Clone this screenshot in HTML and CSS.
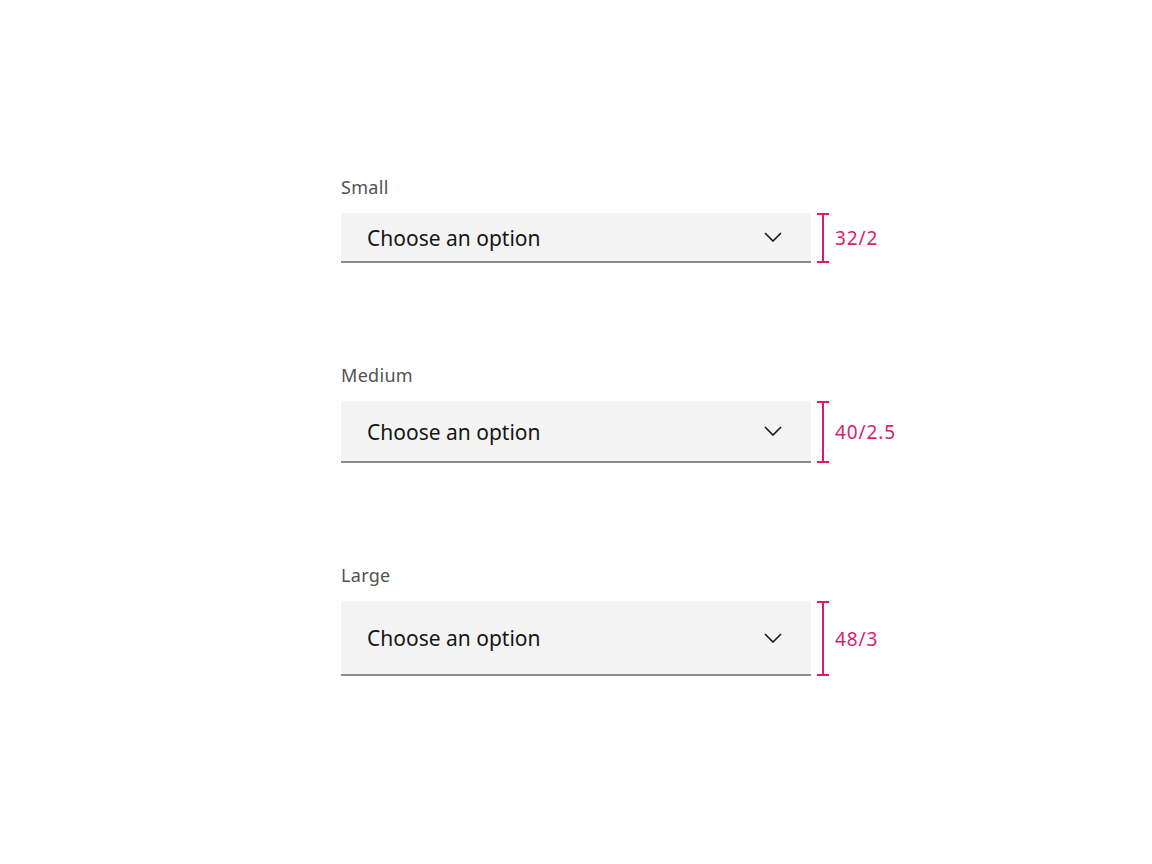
FILE: index.html
```html
<!DOCTYPE html>
<html lang="en">
<head>
<meta charset="utf-8">
<title>Dropdown sizes</title>
<link rel="stylesheet" href="styles.css">
</head>
<body>
<main class="page">
  <section class="group">
    <div class="label">Small</div>
    <div class="row">
      <div class="field field-sm">
        <span class="value">Choose an option</span>
        <svg class="chevron" width="18" height="10" viewBox="0 0 18 10"><path d="M1 1 L9 9 L17 1" fill="none" stroke="#161616" stroke-width="1.6"/></svg>
      </div>
      <div class="measure"><span class="bracket"></span><span class="spec">32/2</span></div>
    </div>
  </section>
  <section class="group">
    <div class="label">Medium</div>
    <div class="row">
      <div class="field field-md">
        <span class="value">Choose an option</span>
        <svg class="chevron" width="18" height="10" viewBox="0 0 18 10"><path d="M1 1 L9 9 L17 1" fill="none" stroke="#161616" stroke-width="1.6"/></svg>
      </div>
      <div class="measure"><span class="bracket"></span><span class="spec">40/2.5</span></div>
    </div>
  </section>
  <section class="group">
    <div class="label">Large</div>
    <div class="row">
      <div class="field field-lg">
        <span class="value">Choose an option</span>
        <svg class="chevron" width="18" height="10" viewBox="0 0 18 10"><path d="M1 1 L9 9 L17 1" fill="none" stroke="#161616" stroke-width="1.6"/></svg>
      </div>
      <div class="measure"><span class="bracket"></span><span class="spec">48/3</span></div>
    </div>
  </section>
</main>
</body>
</html>
```
FILE: styles.css
```css
html, body {
  margin: 0;
  padding: 0;
  background: #ffffff;
}
body {
  font-family: "Noto Sans", "Open Sans", sans-serif;
  color: #161616;
}
.page {
  display: flex;
  flex-direction: column;
  gap: 100px;
  padding: 175px 0 0 341px;
}
.group {
  display: flex;
  flex-direction: column;
}
.label {
  font-size: 18px;
  line-height: 24px;
  color: #525252;
  letter-spacing: 0.3px;
  margin-bottom: 14px;
}
.row {
  display: flex;
  align-items: stretch;
}
.field {
  width: 470px;
  box-sizing: border-box;
  background: #f4f4f4;
  border-bottom: 2px solid #8d8d8d;
  display: flex;
  align-items: center;
  justify-content: space-between;
  padding: 0 29px 0 26px;
}
.field-sm { height: 50px; }
.field-md { height: 62px; }
.field-lg { height: 75px; }
.value {
  font-size: 21px;
  line-height: 28px;
  color: #161616;
  letter-spacing: 0;
  padding-top: 1px;
}
.chevron {
  display: block;
}
.measure {
  display: flex;
  align-items: center;
  margin-left: 6px;
  gap: 6px;
}
.bracket {
  align-self: stretch;
  width: 12px;
  box-sizing: border-box;
  border-top: 2px solid #de1a6e;
  border-bottom: 2px solid #de1a6e;
  background: linear-gradient(#de1a6e, #de1a6e) center / 2px 100% no-repeat;
}
.spec {
  font-size: 19px;
  color: #da1e6f;
  letter-spacing: 0.9px;
}
```
